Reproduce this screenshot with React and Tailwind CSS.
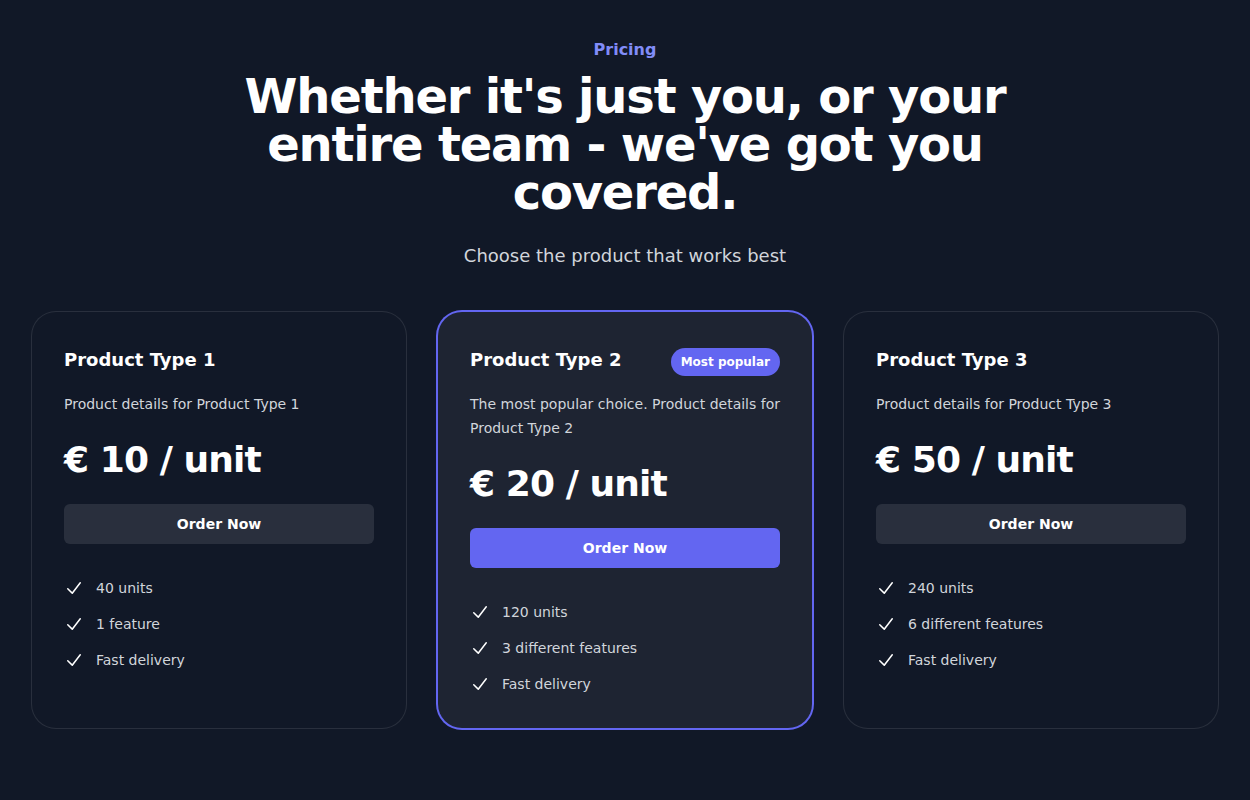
const tiers = [
  {
    name: 'Product Type 1',
    description: 'Product details for Product Type 1',
    price: '€ 10 / unit',
    features: ['40 units', '1 feature', 'Fast delivery'],
    popular: false,
  },
  {
    name: 'Product Type 2',
    description: 'The most popular choice. Product details for Product Type 2',
    price: '€ 20 / unit',
    features: ['120 units', '3 different features', 'Fast delivery'],
    popular: true,
  },
  {
    name: 'Product Type 3',
    description: 'Product details for Product Type 3',
    price: '€ 50 / unit',
    features: ['240 units', '6 different features', 'Fast delivery'],
    popular: false,
  },
];

const CheckIcon = () => (
  <svg viewBox="0 0 20 20" fill="currentColor" className="h-6 w-5 flex-none text-white" aria-hidden="true">
    <path
      fillRule="evenodd"
      d="M16.704 4.153a.75.75 0 01.143 1.052l-8 10.5a.75.75 0 01-1.127.075l-4.5-4.5a.75.75 0 011.06-1.06l3.894 3.893 7.48-9.817a.75.75 0 011.05-.143z"
      clipRule="evenodd"
    />
  </svg>
);

const App = () => {
  return (
    <div className="min-h-screen bg-[#111827] pt-[36px] pb-16 font-['DejaVu_Sans',sans-serif]">
      <div className="mx-auto max-w-7xl px-8">
        {/* Header */}
        <div className="mx-auto max-w-4xl text-center">
          <h2 className="text-base font-semibold leading-7 text-[#818cf8]">Pricing</h2>
          <p className="mt-2 text-5xl font-bold leading-none tracking-tight text-white">
            Whether it's just you, or your entire team - we've got you covered.
          </p>
        </div>
        <p className="mx-auto mt-6 max-w-2xl text-center text-lg leading-8 text-[#d1d5db]">
          Choose the product that works best
        </p>

        {/* Tiers */}
        <div className="mt-10 grid grid-cols-3 gap-8">
          {tiers.map((tier) => (
            <div
              key={tier.name}
              className={
                tier.popular
                  ? 'rounded-3xl bg-[#1e2432] p-8 ring-2 ring-[#6366f1]'
                  : 'rounded-3xl p-8 ring-1 ring-white/10'
              }
            >
              <div className="flex items-center justify-between gap-x-4">
                <h3 className="text-lg font-semibold leading-8 text-white">{tier.name}</h3>
                {tier.popular && (
                  <p className="mt-1 rounded-full bg-[#6366f1] px-2.5 py-1 text-xs font-semibold leading-5 text-white">
                    Most popular
                  </p>
                )}
              </div>
              <p className="mt-4 text-sm leading-6 text-[#d1d5db]">{tier.description}</p>
              <p className="mt-6 text-4xl font-bold tracking-tight text-white">{tier.price}</p>
              <a
                href="#"
                className={
                  tier.popular
                    ? 'mt-6 block rounded-md bg-[#6366f1] px-3 py-2 text-center text-sm font-semibold leading-6 text-white'
                    : 'mt-6 block rounded-md bg-white/10 px-3 py-2 text-center text-sm font-semibold leading-6 text-white'
                }
              >
                Order Now
              </a>
              <ul className="mt-8 space-y-3 text-sm leading-6 text-[#d1d5db]">
                {tier.features.map((feature) => (
                  <li key={feature} className="flex gap-x-3">
                    <CheckIcon />
                    {feature}
                  </li>
                ))}
              </ul>
            </div>
          ))}
        </div>
      </div>
    </div>
  );
};

export default App;
